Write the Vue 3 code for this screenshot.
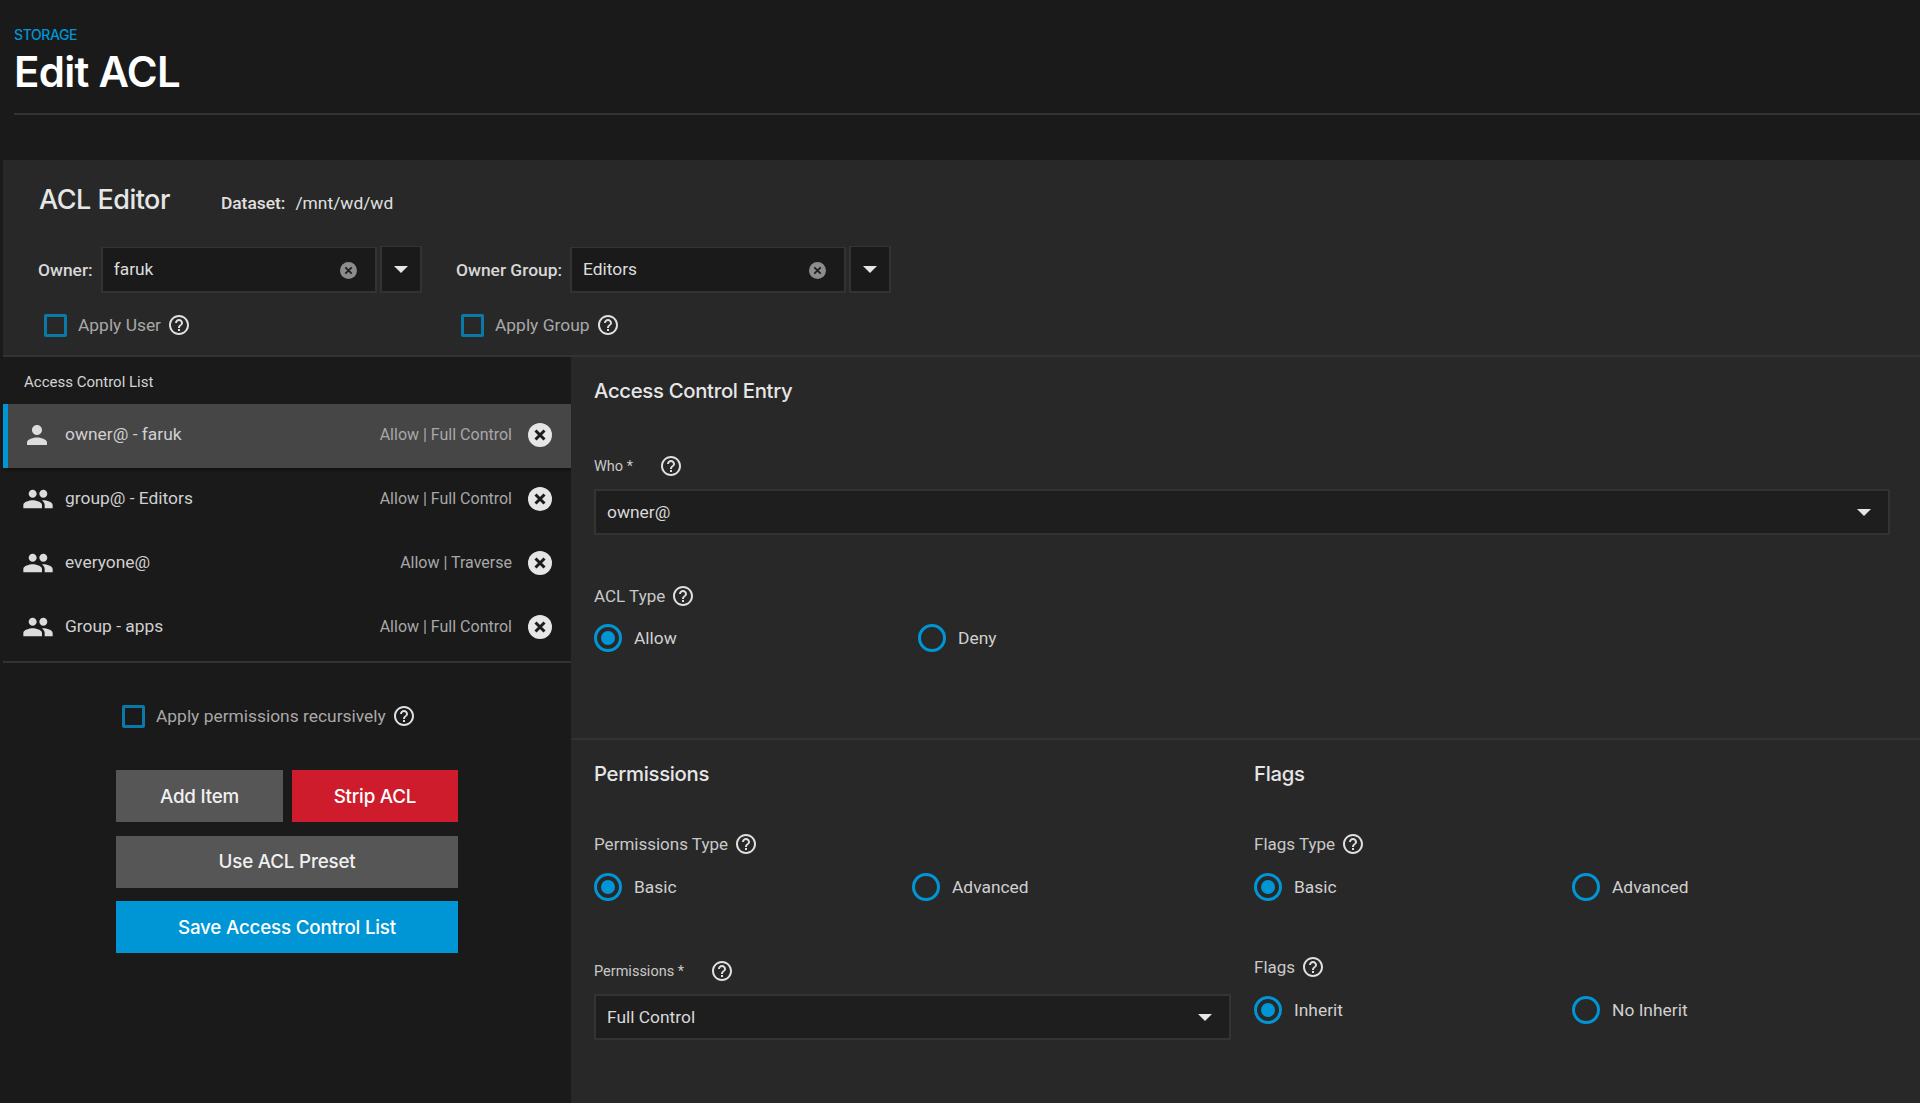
<template>
  <div class="page">
    <svg class="sprite" aria-hidden="true">
      <symbol id="help" viewBox="0 0 24 24">
        <path d="M11 18h2v-2h-2v2zm1-16C6.48 2 2 6.48 2 12s4.48 10 10 10 10-4.48 10-10S17.52 2 12 2zm0 18c-4.41 0-8-3.59-8-8s3.59-8 8-8 8 3.59 8 8-3.59 8-8 8zm0-14c-2.21 0-4 1.79-4 4h2c0-1.1.9-2 2-2s2 .9 2 2c0 2-3 1.75-3 5h2c0-2.25 3-2.5 3-5 0-2.21-1.79-4-4-4z"/>
      </symbol>
      <symbol id="person" viewBox="0 0 24 24">
        <path d="M12 12c2.21 0 4-1.79 4-4s-1.79-4-4-4-4 1.79-4 4 1.79 4 4 4zm0 2c-2.67 0-8 1.34-8 4v2h16v-2c0-2.66-5.33-4-8-4z"/>
      </symbol>
      <symbol id="group" viewBox="0 0 24 24">
        <path d="M16 11c1.66 0 2.99-1.34 2.99-3S17.66 5 16 5c-1.66 0-3 1.34-3 3s1.34 3 3 3zm-8 0c1.66 0 2.99-1.34 2.99-3S9.66 5 8 5C6.34 5 5 6.34 5 8s1.34 3 3 3zm0 2c-2.33 0-7 1.17-7 3.5V19h14v-2.5c0-2.33-4.67-3.5-7-3.5zm8 0c-.29 0-.62.02-.97.05 1.16.84 1.97 1.97 1.97 3.45V19h6v-2.5c0-2.33-4.67-3.5-7-3.5z"/>
      </symbol>
      <symbol id="close" viewBox="0 0 24 24">
        <circle cx="12" cy="12" r="12" fill="#e6e6e6"/>
        <path d="M7.5 7.5l9 9m0-9l-9 9" stroke="#1c1c1c" stroke-width="3" fill="none"/>
      </symbol>
      <symbol id="clear" viewBox="0 0 24 24">
        <circle cx="12" cy="12" r="12" fill="#8c8c8c"/>
        <path d="M7.5 7.5l9 9m0-9l-9 9" stroke="#1c1c1c" stroke-width="2.4" fill="none"/>
      </symbol>
    </svg>

    <header class="page-header">
      <div class="crumb">STORAGE</div>
      <h1 class="page-title">Edit ACL</h1>
    </header>

    <main class="editor">
      <section class="editor-head">
        <div class="head-title">
          <h2 class="editor-title">ACL Editor</h2>
          <div class="dataset"><b>Dataset:</b><span>/mnt/wd/wd</span></div>
        </div>
        <div class="owner-row">
          <div v-for="o in owners" :key="o.label" class="owner" :class="o.cls">
            <label class="owner-label">{{ o.label }}</label>
            <div class="combo">
              <span>{{ o.value }}</span>
              <svg class="clear-icon"><use href="#clear" /></svg>
            </div>
            <button class="combo-btn" type="button"><i class="caret"></i></button>
          </div>
        </div>
        <div class="apply-row">
          <div class="check-line apply-user">
            <span class="checkbox"></span>
            <span class="check-text">Apply User</span>
            <svg class="help"><use href="#help" /></svg>
          </div>
          <div class="check-line apply-group">
            <span class="checkbox"></span>
            <span class="check-text">Apply Group</span>
            <svg class="help"><use href="#help" /></svg>
          </div>
        </div>
      </section>

      <section class="editor-body">
        <aside class="acl-side">
          <div class="list-title">Access Control List</div>
          <ul class="acl-list">
            <li v-for="(item, i) in aclItems" :key="item.name" class="acl-row" :class="{ active: i === 0 }">
              <span class="acl-icon-wrap">
                <svg class="acl-icon" :class="item.icon"><use :href="'#' + item.icon" /></svg>
              </span>
              <span class="acl-name">{{ item.name }}</span>
              <span class="acl-perm">{{ item.perm }}</span>
              <svg class="acl-close"><use href="#close" /></svg>
            </li>
          </ul>
          <div class="recursive">
            <div class="check-line">
              <span class="checkbox"></span>
              <span class="check-text">Apply permissions recursively</span>
              <svg class="help"><use href="#help" /></svg>
            </div>
          </div>
          <div class="actions">
            <div class="actions-pair">
              <button class="btn grey" type="button">Add Item</button>
              <button class="btn red" type="button">Strip ACL</button>
            </div>
            <button class="btn grey" type="button">Use ACL Preset</button>
            <button class="btn blue" type="button">Save Access Control List</button>
          </div>
        </aside>

        <div class="entry">
          <section class="entry-top">
            <h3 class="section-title">Access Control Entry</h3>
            <div class="small-label who-label">Who *<svg class="help"><use href="#help" /></svg></div>
            <div class="select">
              <span>owner@</span>
              <i class="caret"></i>
            </div>
            <div class="field-label acl-type">ACL Type<svg class="help"><use href="#help" /></svg></div>
            <div class="radios acl-radios">
              <label class="radio-item"><span class="radio on"></span>Allow</label>
              <label class="radio-item"><span class="radio"></span>Deny</label>
            </div>
          </section>

          <section class="entry-bottom">
            <div class="perm-col">
              <h3 class="section-title">Permissions</h3>
              <div class="field-label type-label">Permissions Type<svg class="help"><use href="#help" /></svg></div>
              <div class="radios">
                <label class="radio-item"><span class="radio on"></span>Basic</label>
                <label class="radio-item"><span class="radio"></span>Advanced</label>
              </div>
              <div class="small-label perm-label">Permissions *<svg class="help"><use href="#help" /></svg></div>
              <div class="select">
                <span>Full Control</span>
                <i class="caret"></i>
              </div>
            </div>
            <div class="flags-col">
              <h3 class="section-title">Flags</h3>
              <div class="field-label type-label">Flags Type<svg class="help"><use href="#help" /></svg></div>
              <div class="radios">
                <label class="radio-item"><span class="radio on"></span>Basic</label>
                <label class="radio-item"><span class="radio"></span>Advanced</label>
              </div>
              <div class="field-label flags-label">Flags<svg class="help"><use href="#help" /></svg></div>
              <div class="radios">
                <label class="radio-item"><span class="radio on"></span>Inherit</label>
                <label class="radio-item"><span class="radio"></span>No Inherit</label>
              </div>
            </div>
          </section>
        </div>
      </section>
    </main>
  </div>
</template>

<script setup>
const owners = [
  { label: 'Owner:', value: 'faruk', cls: 'owner-user' },
  { label: 'Owner Group:', value: 'Editors', cls: 'owner-group' },
]

const aclItems = [
  { name: 'owner@ - faruk', perm: 'Allow | Full Control', icon: 'person' },
  { name: 'group@ - Editors', perm: 'Allow | Full Control', icon: 'group' },
  { name: 'everyone@', perm: 'Allow | Traverse', icon: 'group' },
  { name: 'Group - apps', perm: 'Allow | Full Control', icon: 'group' },
]
</script>

<style>
html,
body {
  margin: 0;
  background: #1a1a1a;
}
</style>

<style scoped>
.page {
  height: 1103px;
  overflow: hidden;
  background: #1a1a1a;
  color: #e0e0e0;
  font-family: Roboto, "Liberation Sans", sans-serif;
}

.sprite {
  display: none;
}

.page-header {
  margin-left: 14px;
  height: 113px;
  border-bottom: 2px solid #333;
  box-sizing: content-box;
}

.crumb {
  padding-top: 26px;
  font-family: Inter, sans-serif;
  font-size: 14px;
  line-height: 17px;
  font-weight: 500;
  color: #0095d5;
  letter-spacing: -0.4px;
}

.page-title {
  margin: 3px 0 0;
  font-family: Inter, sans-serif;
  font-size: 42px;
  line-height: 52px;
  font-weight: 600;
  letter-spacing: -0.7px;
  color: #fff;
}

.editor {
  margin: 45px 0 0 3px;
  background: #282828;
}

.editor-head {
  height: 197px;
  box-sizing: border-box;
  border-bottom: 2px solid #333;
}

.head-title {
  display: flex;
  align-items: baseline;
  padding: 22px 0 0 36px;
}

.editor-title {
  margin: 0;
  font-family: Inter, sans-serif;
  font-size: 27px;
  line-height: 36px;
  font-weight: 500;
  letter-spacing: -0.5px;
  color: #e6e6e6;
}

.dataset {
  margin-left: 51px;
  font-size: 17.4px;
  color: #e0e0e0;
}

.dataset b {
  font-weight: 500;
  margin-right: 10px;
}

.owner-row {
  display: flex;
  padding: 28px 0 0 35px;
}

.owner {
  display: flex;
  align-items: center;
}

.owner-user {
  width: 418px;
}

.owner-label {
  font-size: 17.4px;
  font-weight: 500;
  color: #d8d8d8;
  margin-right: 8px;
}

.combo {
  box-sizing: border-box;
  width: 276px;
  height: 46px;
  display: flex;
  align-items: center;
  justify-content: space-between;
  padding: 0 18px 0 11px;
  background: #1a1a1a;
  border: 2px solid #333;
  border-top-width: 1px;
  font-size: 17.4px;
  color: #ddd;
}

.clear-icon {
  width: 17px;
  height: 17px;
  margin-top: 2px;
}

.combo-btn {
  box-sizing: border-box;
  width: 42px;
  height: 47px;
  margin-left: 3px;
  padding: 0;
  background: #1a1a1a;
  border: 2px solid #333;
  border-top-width: 1px;
  display: flex;
  align-items: center;
  justify-content: center;
}

.caret {
  display: block;
  width: 0;
  height: 0;
  border-left: 7px solid transparent;
  border-right: 7px solid transparent;
  border-top: 7px solid #e6e6e6;
}

.apply-row {
  display: flex;
  padding: 20px 0 0 41px;
}

.apply-user {
  width: 417px;
}

.check-line {
  display: flex;
  align-items: center;
  height: 24px;
}

.checkbox {
  box-sizing: border-box;
  width: 23px;
  height: 23px;
  border: 3px solid #0a79a8;
  border-radius: 2px;
  margin-right: 11px;
}

.check-text {
  font-size: 17.4px;
  color: #a8a8a8;
}

.help {
  width: 24px;
  height: 24px;
  margin-left: 6px;
  fill: #e0e0e0;
  flex: none;
}

.editor-body {
  display: grid;
  grid-template-columns: 568px 1fr;
  height: 746px;
}

.acl-side {
  background: #1a1a1a;
}

.list-title {
  height: 47px;
  padding-left: 21px;
  font-size: 15px;
  line-height: 50px;
  color: #d4d4d4;
}

.acl-list {
  list-style: none;
  margin: 0;
  padding: 0 0 1px;
  border-bottom: 2px solid #333;
}

.acl-row {
  display: flex;
  align-items: center;
  height: 64px;
  box-sizing: border-box;
  padding: 0 19px 2px 0;
}

.acl-row.active {
  background: #464646;
  border-left: 5px solid #0095d5;
  box-shadow: 0 2px 3px rgba(0, 0, 0, 0.35);
}

.acl-row.active .acl-icon-wrap {
  width: 57px;
  padding-left: 14px;
}

.acl-icon-wrap {
  box-sizing: border-box;
  width: 62px;
  padding-left: 19px;
  display: flex;
  flex: none;
}

.acl-icon {
  width: 32px;
  height: 32px;
  fill: #dcdcdc;
  flex: none;
}

.acl-icon.person {
  width: 30px;
  height: 30px;
}

.acl-name {
  flex: 1;
  padding-bottom: 3px;
  font-size: 17.4px;
  color: #d0d0d0;
}

.acl-perm {
  padding-bottom: 2px;
  font-size: 16px;
  color: #a8a8a8;
  margin-right: 16px;
}

.acl-close {
  width: 24px;
  height: 24px;
  flex: none;
}

.recursive {
  padding: 41px 0 0 119px;
}

.actions {
  width: 342px;
  margin: 42px 0 0 113px;
  display: flex;
  flex-direction: column;
  gap: 13.5px;
}

.actions-pair {
  display: grid;
  grid-template-columns: 167px 166px;
  gap: 9px;
}

.btn {
  height: 52px;
  border: 0;
  padding: 0;
  font-family: Inter, sans-serif;
  font-size: 18.8px;
  font-weight: 500;
  letter-spacing: -0.2px;
  color: #f0f0f0;
}

.grey {
  background: #565656;
}

.red {
  background: #ce1c2c;
  color: #fff;
}

.blue {
  background: #0095d5;
  color: #fff;
}

.entry {
  background: #282828;
  min-width: 0;
}

.entry-top {
  box-sizing: border-box;
  height: 383px;
  padding: 20px 30px 0 23px;
  border-bottom: 2px solid #333;
}

.section-title {
  margin: 0;
  font-family: Inter, sans-serif;
  font-size: 20.3px;
  line-height: 28px;
  font-weight: 500;
  letter-spacing: -0.3px;
  color: #e6e6e6;
}

.small-label,
.field-label {
  display: flex;
  align-items: center;
  height: 24px;
  color: #c8c8c8;
}

.small-label {
  font-size: 14.5px;
}

.field-label {
  font-size: 17px;
}

.who-label {
  margin-top: 49px;
}

.who-label .help {
  margin-left: 26px;
}

.select {
  box-sizing: border-box;
  display: flex;
  align-items: center;
  justify-content: space-between;
  height: 46px;
  margin-top: 11px;
  padding: 0 17px 0 11px;
  background: #1e1e1e;
  border: 2px solid #333;
  font-size: 17.4px;
  color: #d8d8d8;
}

.acl-type {
  margin-top: 49px;
}

.radios {
  display: grid;
  grid-template-columns: 318px 1fr;
}

.acl-radios {
  margin-top: 15px;
  grid-template-columns: 324px 1fr;
}

.radio-item {
  display: flex;
  align-items: center;
  height: 30px;
  font-size: 17.4px;
  color: #d0d0d0;
}

.radio {
  box-sizing: border-box;
  width: 28px;
  height: 28px;
  margin-right: 12px;
  border: 3px solid #0095d5;
  border-radius: 50%;
  display: flex;
  align-items: center;
  justify-content: center;
}

.radio.on::after {
  content: "";
  width: 14px;
  height: 14px;
  border-radius: 50%;
  background: #0095d5;
}

.entry-bottom {
  display: grid;
  grid-template-columns: 637px 1fr;
  gap: 23px;
  padding: 20px 0 0 23px;
}

.type-label {
  margin-top: 44px;
}

.type-label + .radios {
  margin-top: 16px;
}

.perm-label {
  margin-top: 57px;
}

.perm-label .help {
  margin-left: 26px;
}

.flags-label {
  margin-top: 53px;
}

.flags-label + .radios {
  margin-top: 16px;
}
</style>
